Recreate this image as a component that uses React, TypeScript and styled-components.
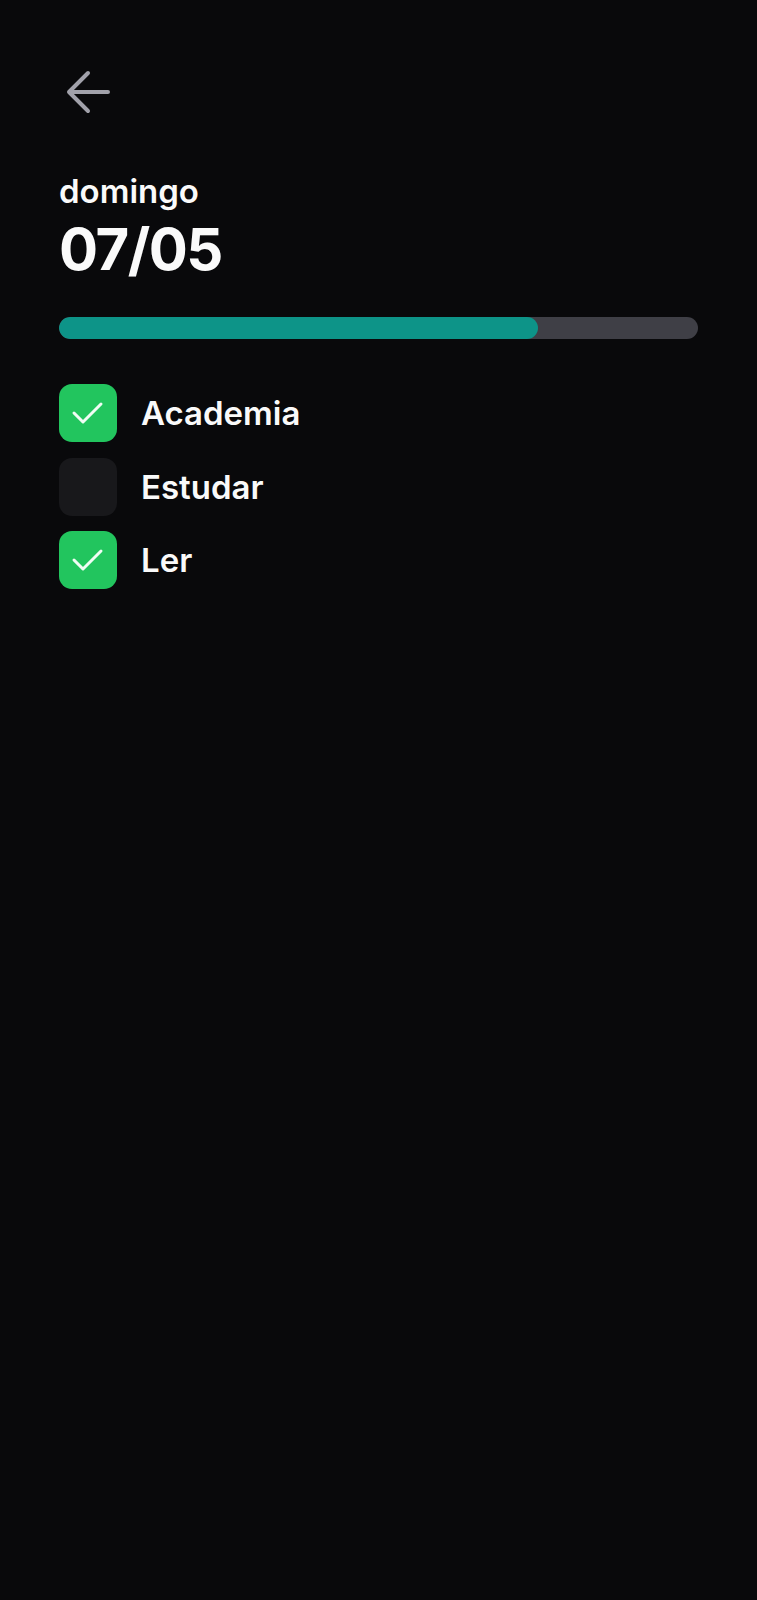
import React from "react";
import styled, { createGlobalStyle } from "styled-components";

const Global = createGlobalStyle`
  html, body { margin: 0; padding: 0; background: #09090b; }
  body { font-family: Inter, "Noto Sans", sans-serif; color: #fafafa; }
`;

const Page = styled.div`
  min-height: 1600px;
  box-sizing: border-box;
  padding: 70px 59px 0 59px;
  display: flex;
  flex-direction: column;
  background: #09090b;
`;

const BackButton = styled.button`
  width: 44px;
  height: 44px;
  padding: 0;
  margin-left: 7px;
  border: none;
  background: transparent;
  display: flex;
  cursor: pointer;
`;

const Header = styled.header`
  display: flex;
  flex-direction: column;
  margin-top: 58px;
`;

const Weekday = styled.span`
  font-size: 33px;
  line-height: 38px;
  font-weight: 600;
  color: #fafafa;
`;

const DateText = styled.h1`
  margin: 10px 0 0 0;
  font-size: 58px;
  line-height: 58px;
  font-weight: 700;
  letter-spacing: -1.5px;
  color: #fafafa;
`;

const Track = styled.div`
  margin-top: 39px;
  height: 22px;
  border-radius: 11px;
  background: #3f3f46;
  overflow: hidden;
`;

const Fill = styled.div`
  height: 100%;
  border-radius: 11px;
  background: #0d9488;
`;

const List = styled.ul`
  list-style: none;
  margin: 45px 0 0 0;
  padding: 0;
  display: flex;
  flex-direction: column;
  gap: 15.5px;
`;

const Item = styled.li`
  display: flex;
  align-items: center;
  gap: 24px;
`;

const Box = styled.div<{ $checked: boolean }>`
  width: 58px;
  height: 58px;
  border-radius: 13px;
  background: ${(p) => (p.$checked ? "#22c55e" : "#18181b")};
  display: flex;
  flex-shrink: 0;
`;

const Label = styled.span`
  font-size: 33px;
  font-weight: 600;
  color: #fafafa;
`;

const habits = [
  { name: "Academia", done: true },
  { name: "Estudar", done: false },
  { name: "Ler", done: true },
];

export default function App() {
  return (
    <>
      <Global />
      <Page>
        <BackButton aria-label="Voltar">
          <svg width="44" height="44" viewBox="0 0 44 44" fill="none">
            <path
              d="M22 3 L3 22 L22 41 M3 22 H42"
              stroke="#a1a1aa"
              strokeWidth="4"
              strokeLinecap="round"
              strokeLinejoin="round"
            />
          </svg>
        </BackButton>
        <Header>
          <Weekday>domingo</Weekday>
          <DateText>07/05</DateText>
        </Header>
        <Track>
          <Fill style={{ width: "75%" }} />
        </Track>
        <List>
          {habits.map((h) => (
            <Item key={h.name}>
              <Box $checked={h.done}>
                {h.done && (
                  <svg width="58" height="58" viewBox="0 0 58 58" fill="none">
                    <path
                      d="M15 29 L24 38 L42 20"
                      stroke="#f0fdf4"
                      strokeWidth="3"
                      strokeLinecap="round"
                      strokeLinejoin="round"
                    />
                  </svg>
                )}
              </Box>
              <Label>{h.name}</Label>
            </Item>
          ))}
        </List>
      </Page>
    </>
  );
}
